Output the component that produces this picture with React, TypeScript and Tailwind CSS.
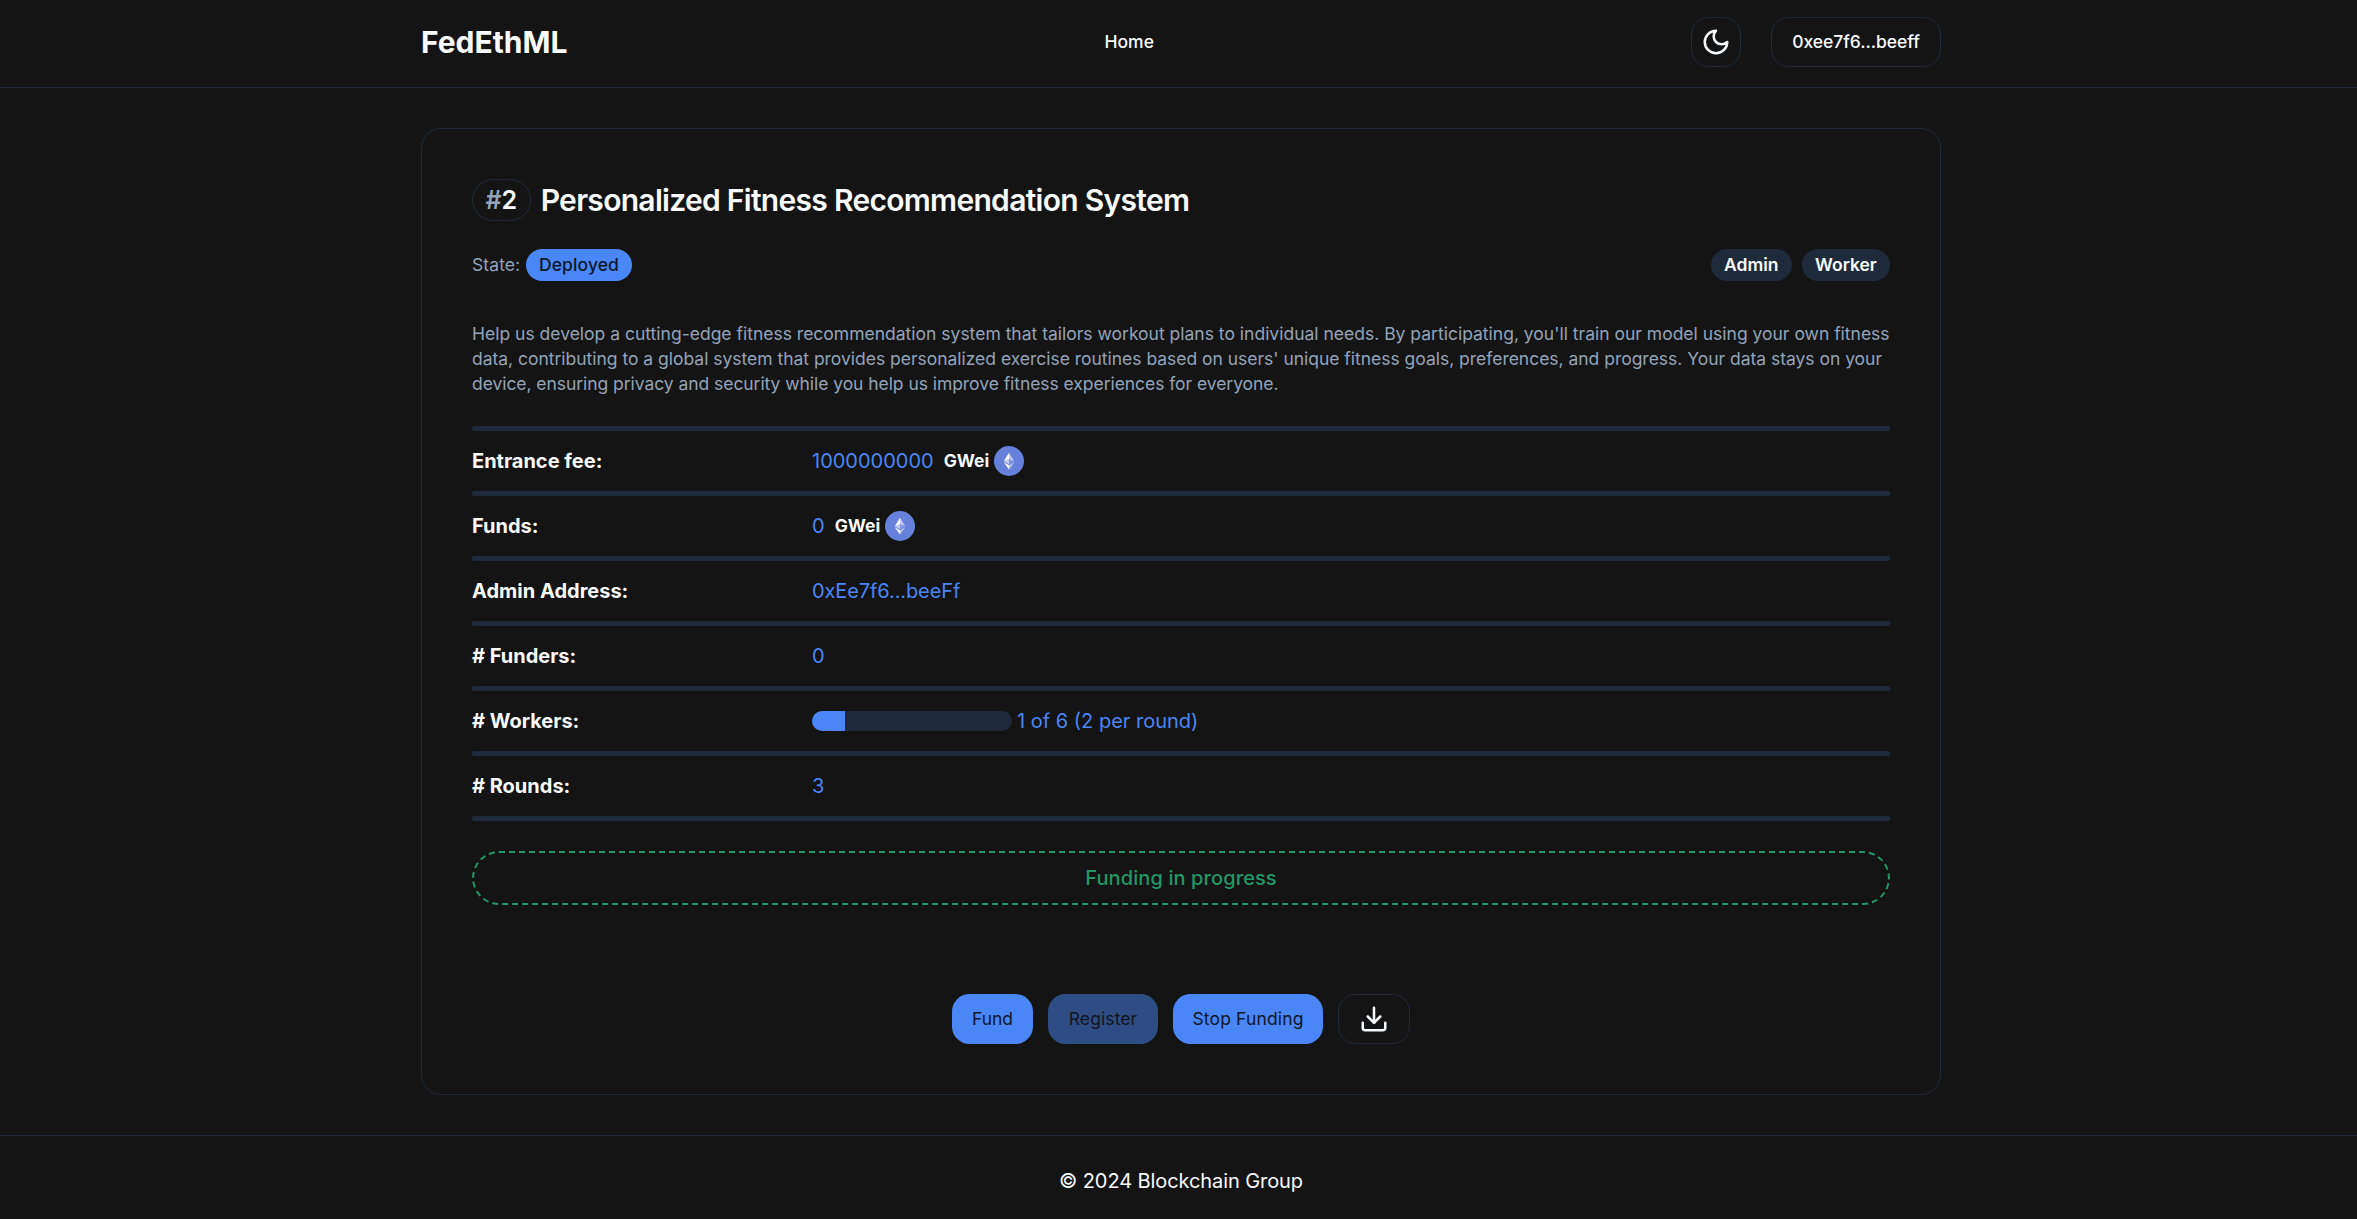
import type { ReactNode } from "react";

function MoonIcon() {
  return (
    <svg className="size-[30px]" viewBox="0 0 24 24" fill="none" stroke="currentColor" strokeWidth="2" strokeLinecap="round" strokeLinejoin="round">
      <path d="M12 3a6 6 0 0 0 9 9 9 9 0 1 1-9-9Z" />
    </svg>
  );
}

function DownloadIcon() {
  return (
    <svg className="size-[30px]" viewBox="0 0 24 24" fill="none" stroke="currentColor" strokeWidth="2" strokeLinecap="round" strokeLinejoin="round">
      <path d="M21 15v4a2 2 0 0 1-2 2H5a2 2 0 0 1-2-2v-4" />
      <polyline points="7 10 12 15 17 10" />
      <line x1="12" x2="12" y1="15" y2="3" />
    </svg>
  );
}

function EthIcon() {
  return (
    <svg className="size-[30px]" viewBox="0 0 32 32">
      <circle cx="16" cy="16" r="16" fill="#6581dc" />
      <g fill="#FFF" transform="translate(3.8 4.25) scale(.74)">
        <path fillOpacity=".602" d="M16.498 4v8.87l7.497 3.35z" />
        <path d="M16.498 4L9 16.22l7.498-3.35z" />
        <path fillOpacity=".602" d="M16.498 21.968v6.027L24 17.616z" />
        <path d="M16.498 27.995v-6.028L9 17.616z" />
        <path fillOpacity=".2" d="M16.498 20.573l7.497-4.353-7.497-3.348z" />
        <path fillOpacity=".602" d="M9 16.22l7.498 4.353v-7.701z" />
      </g>
    </svg>
  );
}

function Separator() {
  return <div className="h-[5px] w-full rounded-[2px] bg-[#1f2a3b]" />;
}

function Row({ label, children }: { label: string; children: ReactNode }) {
  return (
    <>
      <div className="flex h-[60px] items-center">
        <div className="w-[340px] font-bold">{label}</div>
        <div className="flex items-center text-[#4a86f5]">{children}</div>
      </div>
      <Separator />
    </>
  );
}

function Wei() {
  return (
    <>
      <span className="mr-[5px] ml-[10px] text-[17.5px] font-bold text-[#f8fafc]">GWei</span>
      <EthIcon />
    </>
  );
}

const button = "flex h-[50px] items-center justify-center rounded-[17.5px] text-[17.5px]";
const badge = "flex h-8 items-center rounded-full px-[13.25px]";

export default function App() {
  return (
    <div className="flex h-[1219px] flex-col bg-[#141414] font-['Inter',sans-serif] text-xl text-[#f8fafc] antialiased">
      <header className="h-[88px] border-b border-[#1f2a3b] pl-[5px]">
        <div className="mx-auto flex h-[84px] w-[1520px] items-center justify-between">
          <div className="text-[30px] font-bold">FedEthML</div>
          <nav className="pt-px text-[17.5px] font-medium">Home</nav>
          <div className="flex gap-[30px]">
            <button className="flex size-[50px] items-center justify-center rounded-[17.5px] border border-[#1f2a3b]">
              <MoonIcon />
            </button>
            <button className="flex h-[50px] w-[170px] items-center justify-center rounded-[17.5px] border border-[#1f2a3b] pt-px text-[17.5px] font-medium tracking-[-0.05px]">
              0xee7f6...beeff
            </button>
          </div>
        </div>
      </header>

      <div className="pt-10 pl-[5px]">
        <main className="mx-auto h-[967px] w-[1520px] rounded-[20px] border border-[#1f2a3b] p-[50px]">
          <div className="flex items-center gap-[10px]">
            <div className="flex h-[42px] items-center rounded-full border border-[#1f2a3b] px-[12.5px] text-[25px] leading-none font-semibold">
              <span className="text-[#94a3b8]">#</span>2
            </div>
            <h1 className="text-[30px] leading-none font-semibold tracking-[-0.7px]">Personalized Fitness Recommendation System</h1>
          </div>

          <div className="mt-7 flex h-8 items-center justify-between text-[17.5px]">
            <div className="flex items-center gap-[5.5px] text-[#94a3b8]">
              <span className="tracking-[0.1px]">State:</span>
              <span className={badge + " bg-[#4a86f5] font-medium tracking-[0.1px] text-[#0f172a]"}>Deployed</span>
            </div>
            <div className="flex gap-[10px] font-semibold">
              <span className={badge + " bg-[#1f2a3b]"}>Admin</span>
              <span className={badge + " bg-[#1f2a3b]"}>Worker</span>
            </div>
          </div>

          <p className="mt-10 mb-[30px] text-[17.5px] leading-[25px] text-[#94a3b8]">
            <span className="block whitespace-nowrap">
              Help us develop a cutting-edge fitness recommendation system that tailors workout plans to individual needs. By participating, you'll train our model using your own fitness
            </span>
            <span className="block tracking-[-0.02px] whitespace-nowrap">
              data, contributing to a global system that provides personalized exercise routines based on users' unique fitness goals, preferences, and progress. Your data stays on your
            </span>
            <span className="block tracking-[-0.055px] whitespace-nowrap">
              device, ensuring privacy and security while you help us improve fitness experiences for everyone.
            </span>
          </p>

          <Separator />
          <Row label="Entrance fee:">1000000000<Wei /></Row>
          <Row label="Funds:">0<Wei /></Row>
          <Row label="Admin Address:"><span className="tracking-[-0.1px]">0xEe7f6...beeFf</span></Row>
          <Row label="# Funders:">0</Row>
          <Row label="# Workers:">
            <div className="mr-[5px] h-5 w-[200px] overflow-hidden rounded-full bg-[#1f2a3b]">
              <div className="h-full w-1/6 bg-[#4a86f5]" />
            </div>
            1 of 6 (2 per round)
          </Row>
          <Row label="# Rounds:">3</Row>

          <div className="mt-[30px] flex h-[54px] items-center justify-center rounded-full border-2 border-dashed border-[#259665] font-medium tracking-[0.1px] text-[#259665]">
            Funding in progress
          </div>

          <div className="mt-[89px] flex justify-center gap-[15px] text-[#0f172a]">
            <button className={button + " w-[81px] bg-[#4a86f5] pt-px"}>Fund</button>
            <button className={button + " w-[110px] bg-[#4a86f5] pt-px tracking-[0.1px] opacity-50"}>Register</button>
            <button className={button + " w-[150px] bg-[#4a86f5] pt-px tracking-[0.15px]"}>Stop Funding</button>
            <button className={button + " w-[72px] border border-[#1f2a3b] text-[#f8fafc]"}>
              <DownloadIcon />
            </button>
          </div>
        </main>
      </div>

      <footer className="mt-10 flex flex-1 items-center justify-center border-t border-[#1f2a3b] pt-[7px] pl-[5px] tracking-[-0.09px]">© 2024 Blockchain Group</footer>
    </div>
  );
}
